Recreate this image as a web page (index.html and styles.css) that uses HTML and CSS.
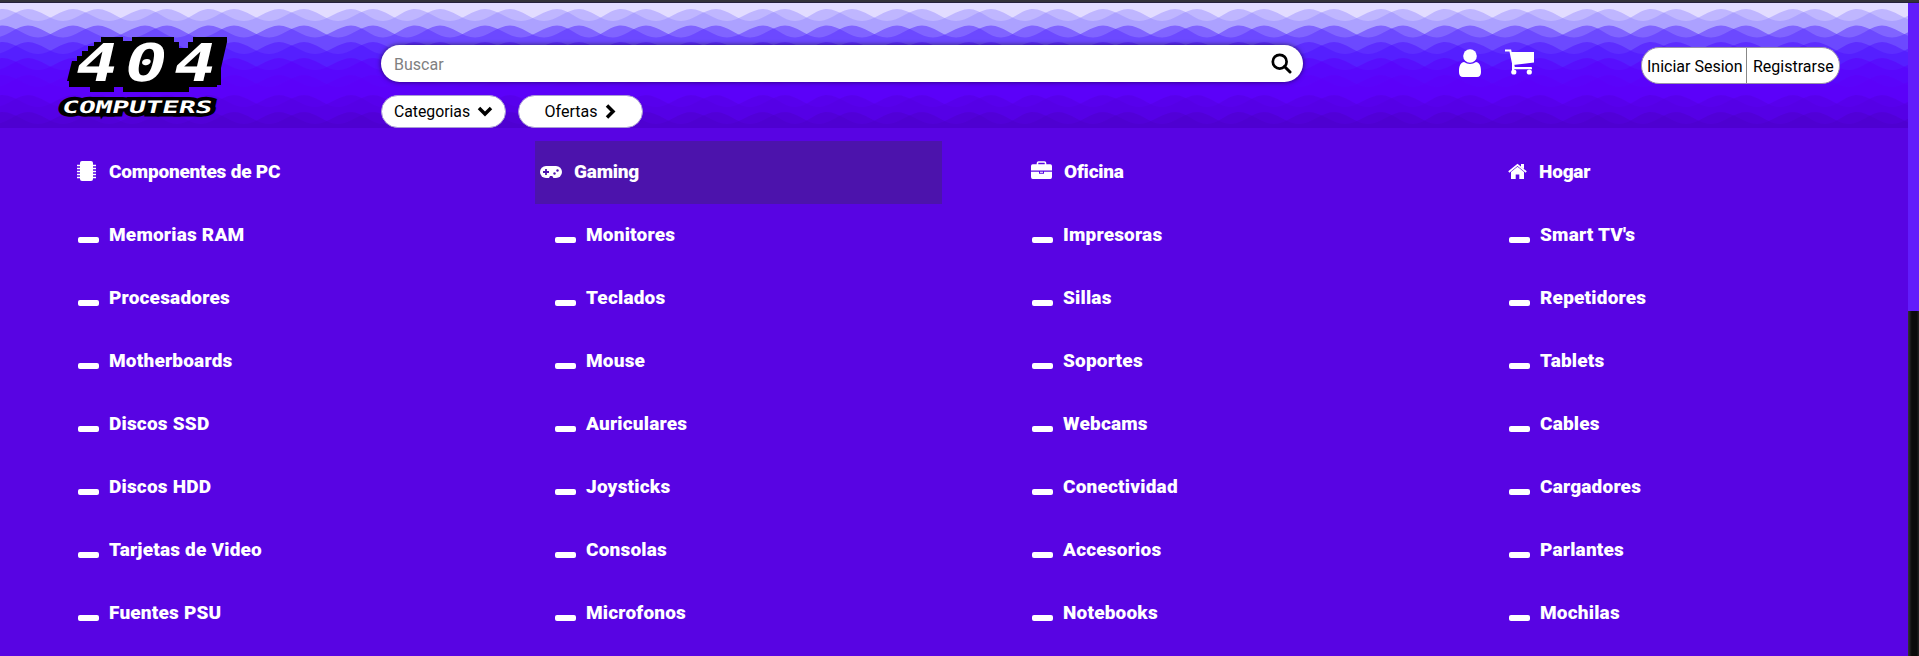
FILE: index.html
```
<!DOCTYPE html>
<html lang="es">
<head>
<meta charset="utf-8">
<title>404 Computers</title>
<link rel="stylesheet" href="styles.css">
</head>
<body>
<div class="topline"></div>
<div class="viewport">
<div class="page">
<header class="header">
  <svg class="waves" width="1908" height="125" aria-hidden="true">
    <defs>
      <g id="swell">
        <path d="M-61 0C-48 0-38 12-26 12S-9 0 3 0S26 12 38 12S61 0 73 0S97 12 109 12S133 0 145 0S165 12 177 12S197 0 209 0S232 12 244 12V140H-61Z"/>
        <path d="M-39 0C-27 0-17 12-5 12S16 0 28 0S51 12 63 12S86 0 98 0S120 12 132 12S155 0 167 0S189 12 201 12S222 0 234 0V140H-39Z"/>
      </g>
      <pattern id="sea" width="206" height="125" patternUnits="userSpaceOnUse">
        <rect width="206" height="125" fill="#e2dcff"/>
        <use href="#swell" y="6" fill="#9788ff" fill-opacity=".46"/>
        <use href="#swell" y="22.5" fill="#5d34ff" fill-opacity=".56"/>
        <use href="#swell" y="39" fill="#4e12ff" fill-opacity=".5"/>
        <use href="#swell" y="55" fill="#5a00fc" fill-opacity=".5"/>
        <use href="#swell" y="72" fill="#5c00f8" fill-opacity=".5"/>
        <use href="#swell" y="92" fill="#5300df" fill-opacity=".5"/>
        <use href="#swell" y="109" fill="#4b00c8" fill-opacity=".45"/>
      </pattern>
    </defs>
    <rect width="1908" height="125" fill="url(#sea)"/>
  </svg>
  <div class="bar">
    <svg class="logo" width="176" height="90" viewBox="0 0 176 90" role="img" aria-label="404 Computers">
      <path d="M44 3H66V7H75V3H117V8H122V14H131V8H136V3H170V8L164 34V51H160V53H132V58H66V53H57V58H33V53H12V47H10L15 27H20V22H25V17H31V12H37V8H44Z"/>
      <text class="logo-number" transform="translate(15 47) skewX(-13)"><tspan x="0" textLength="42" lengthAdjust="spacingAndGlyphs">4</tspan><tspan x="49" textLength="42" lengthAdjust="spacingAndGlyphs">0</tspan><tspan x="98" textLength="42" lengthAdjust="spacingAndGlyphs">4</tspan></text>
      <text class="logo-name" transform="translate(4 79) skewX(-13)" textLength="150" lengthAdjust="spacingAndGlyphs">COMPUTERS</text>
    </svg>
    <div class="middle">
      <div class="search"><span>Buscar</span>
        <svg width="21" height="21" viewBox="0 0 21 21"><circle cx="8.7" cy="8.7" r="6.9" fill="none" stroke="#000" stroke-width="2.7"/><path d="M13.5 13.5 19 19" stroke="#000" stroke-width="3" stroke-linecap="round"/></svg>
      </div>
      <div class="pills">
        <a class="pill">Categorias <svg width="16" height="11" viewBox="0 0 16 11"><path d="M2 2 8 8 14 2" fill="none" stroke="#000" stroke-width="3.5"/></svg></a>
        <a class="pill">Ofertas <svg width="11" height="15" viewBox="0 0 11 15"><path d="M2 1.5 8 7.5 2 13.5" fill="none" stroke="#000" stroke-width="3.5"/></svg></a>
      </div>
    </div>
    <div class="actions">
      <svg width="24" height="28" viewBox="0 0 24 28" fill="#fff"><path d="M6 13C1 14 1 20 1 23Q1 28 5 28H19Q23 28 23 23C23 20 23 14 18 13Q12 17 6 13Z"/><circle cx="12" cy="7" r="6.8"/></svg>
      <svg width="30" height="26" viewBox="0 0 30 26"><path d="M1 1.5H6.3L10 19H27" fill="none" stroke="#fff" stroke-width="2"/><path d="M7 3H30V13.5L9 16Z" fill="#fff"/><path d="M9 14V22M8 19.3H28" stroke="#fff" stroke-width="2"/><circle cx="9.8" cy="23" r="2.6" fill="#fff"/><circle cx="25.3" cy="23" r="2.6" fill="#fff"/></svg>
    </div>
    <div class="account"><a class="login">Iniciar Sesion</a><a class="register">Registrarse</a></div>
  </div>
</header>
<nav class="menu">
  <ul>
    <li class="title"><svg width="20" height="20" viewBox="0 0 20 20"><rect x="3" width="13" height="20" rx="2" fill="#fff"/><path d="M0 4.5H19M0 7.5H19M0 10.5H19M0 13.5H19M0 16.5H19" stroke="#fff" stroke-width="1.3"/></svg><a>Componentes de PC</a></li>
    <li><i></i><a>Memorias RAM</a></li><li><i></i><a>Procesadores</a></li><li><i></i><a>Motherboards</a></li><li><i></i><a>Discos SSD</a></li><li><i></i><a>Discos HDD</a></li><li><i></i><a>Tarjetas de Video</a></li><li><i></i><a>Fuentes PSU</a></li>
  </ul>
  <ul>
    <li class="title active"><svg width="22" height="20" viewBox="0 0 22 20"><rect y="5" width="22" height="12" rx="6" fill="#fff"/><path d="M3 11H9M6 8V14" stroke="#4c13ac" stroke-width="1.8"/><circle cx="14.5" cy="12.5" r="1.2" fill="#4c13ac"/><circle cx="17.5" cy="9.5" r="1.2" fill="#4c13ac"/><path d="M8.5 18 10 15H12.3L14 18Z" fill="#4c13ac"/></svg><a>Gaming</a></li>
    <li><i></i><a>Monitores</a></li><li><i></i><a>Teclados</a></li><li><i></i><a>Mouse</a></li><li><i></i><a>Auriculares</a></li><li><i></i><a>Joysticks</a></li><li><i></i><a>Consolas</a></li><li><i></i><a>Microfonos</a></li>
  </ul>
  <ul>
    <li class="title"><svg width="21" height="20" viewBox="0 0 21 20"><path d="M6.5 4V2Q6.5 1 7.5 1H13.5Q14.5 1 14.5 2V4" fill="none" stroke="#fff" stroke-width="1.6"/><path d="M0 9.5V5Q0 3.3 1.7 3.3H19.3Q21 3.3 21 5V9.5ZM0 10.7H8V12.7H13V10.7H21V16Q21 18 19.3 18H1.7Q0 18 0 16ZM9 10.7H12V11.7H9Z" fill="#fff"/></svg><a>Oficina</a></li>
    <li><i></i><a>Impresoras</a></li><li><i></i><a>Sillas</a></li><li><i></i><a>Soportes</a></li><li><i></i><a>Webcams</a></li><li><i></i><a>Conectividad</a></li><li><i></i><a>Accesorios</a></li><li><i></i><a>Notebooks</a></li>
  </ul>
  <ul>
    <li class="title"><svg width="19" height="20" viewBox="0 0 19 20"><path d="M.8 11 9.5 3.8 18.2 11" fill="none" stroke="#fff" stroke-width="1.8"/><path d="M13 3H16V8L13 6ZM3 11 9.5 5.7 16 11V18H11.3V13.5H7.7V18H3Z" fill="#fff"/></svg><a>Hogar</a></li>
    <li><i></i><a>Smart TV's</a></li><li><i></i><a>Repetidores</a></li><li><i></i><a>Tablets</a></li><li><i></i><a>Cables</a></li><li><i></i><a>Cargadores</a></li><li><i></i><a>Parlantes</a></li><li><i></i><a>Mochilas</a></li>
  </ul>
</nav>
</div>
<div class="scrollbar"><div class="thumb"></div></div>
</div>
</body>
</html>
```
FILE: styles.css
```
* { box-sizing: border-box; }
body { margin: 0; height: 656px; overflow: hidden; background: #5804e3; font-family: Roboto, "Open Sans", sans-serif; }
.topline { height: 3px; background: #333238; border-bottom: 1px solid #25213c; }
.viewport { display: flex; height: 653px; }
.page { width: 1908px; flex: none; }
.header { position: relative; height: 125px; }
.waves { position: absolute; inset: 0; }
.bar { position: relative; display: flex; align-items: flex-start; height: 125px; padding-left: 57px; }
.logo { margin-top: 31px; overflow: visible; }
.logo-number { font: bold 52px "DejaVu Sans Mono", monospace; fill: #fff; }
.logo-name { font: bold 17px "DejaVu Sans Mono", monospace; fill: #fff; stroke: #000; stroke-width: 7; paint-order: stroke; }
.middle { width: 922px; margin: 42px 0 0 148px; }
.search { display: flex; align-items: center; justify-content: space-between; height: 37px; border-radius: 19px; padding: 0 11px 0 13px; background: #fff; color: #808080; font-size: 16px; box-shadow: 0 0 5px rgba(0,0,0,.6); }
.search span { padding-top: 1px; }
.pills { display: flex; gap: 12px; margin-top: 13px; }
.pill { display: flex; align-items: center; justify-content: center; gap: 8px; width: 125px; height: 33px; border: 1px solid #a99bd5; border-radius: 17px; background: #fff; font-size: 16px; }
.pill:first-child { font-size: 15.8px; gap: 7px; }
.actions { display: flex; gap: 22px; margin: 46px 2px 0 155px; }
.account { display: flex; width: 199px; height: 37px; margin: 44px 0 0 105px; border: 1px solid #9a91ad; border-radius: 18px; background: #fff; font-size: 16px; line-height: 37px; }
.login { width: 105px; padding-left: 5px; border-right: 1px solid #888; }
.register { padding-left: 6px; }
.menu { display: grid; grid-template-columns: repeat(4, 477px); padding-top: 13px; }
.menu ul { list-style: none; margin: 0; padding: 0 12px 0 58px; }
.menu li { display: flex; align-items: center; height: 63px; padding-left: 20px; color: #fff; font-weight: 900; font-size: 19px; letter-spacing: .2px; }
.menu li svg { flex: none; margin: -4px 0 0 -1px; }
.menu li a { padding: 0 0 2px 12px; }
.menu li i { width: 21px; height: 6px; margin-top: 8px; border-radius: 2px; background: #fff; flex: none; }
.menu li.title { letter-spacing: -.2px; }
.menu li:not(.title) a { padding-left: 10px; }
.menu li.active { padding-left: 6px; background: #4c13ac; }
.scrollbar { width: 11px; flex: none; background: linear-gradient(90deg, #363636, #0b0b0b 35%, #0b0b0b 80%, #252525); }
.thumb { height: 308px; background: #611cfb; }
```
